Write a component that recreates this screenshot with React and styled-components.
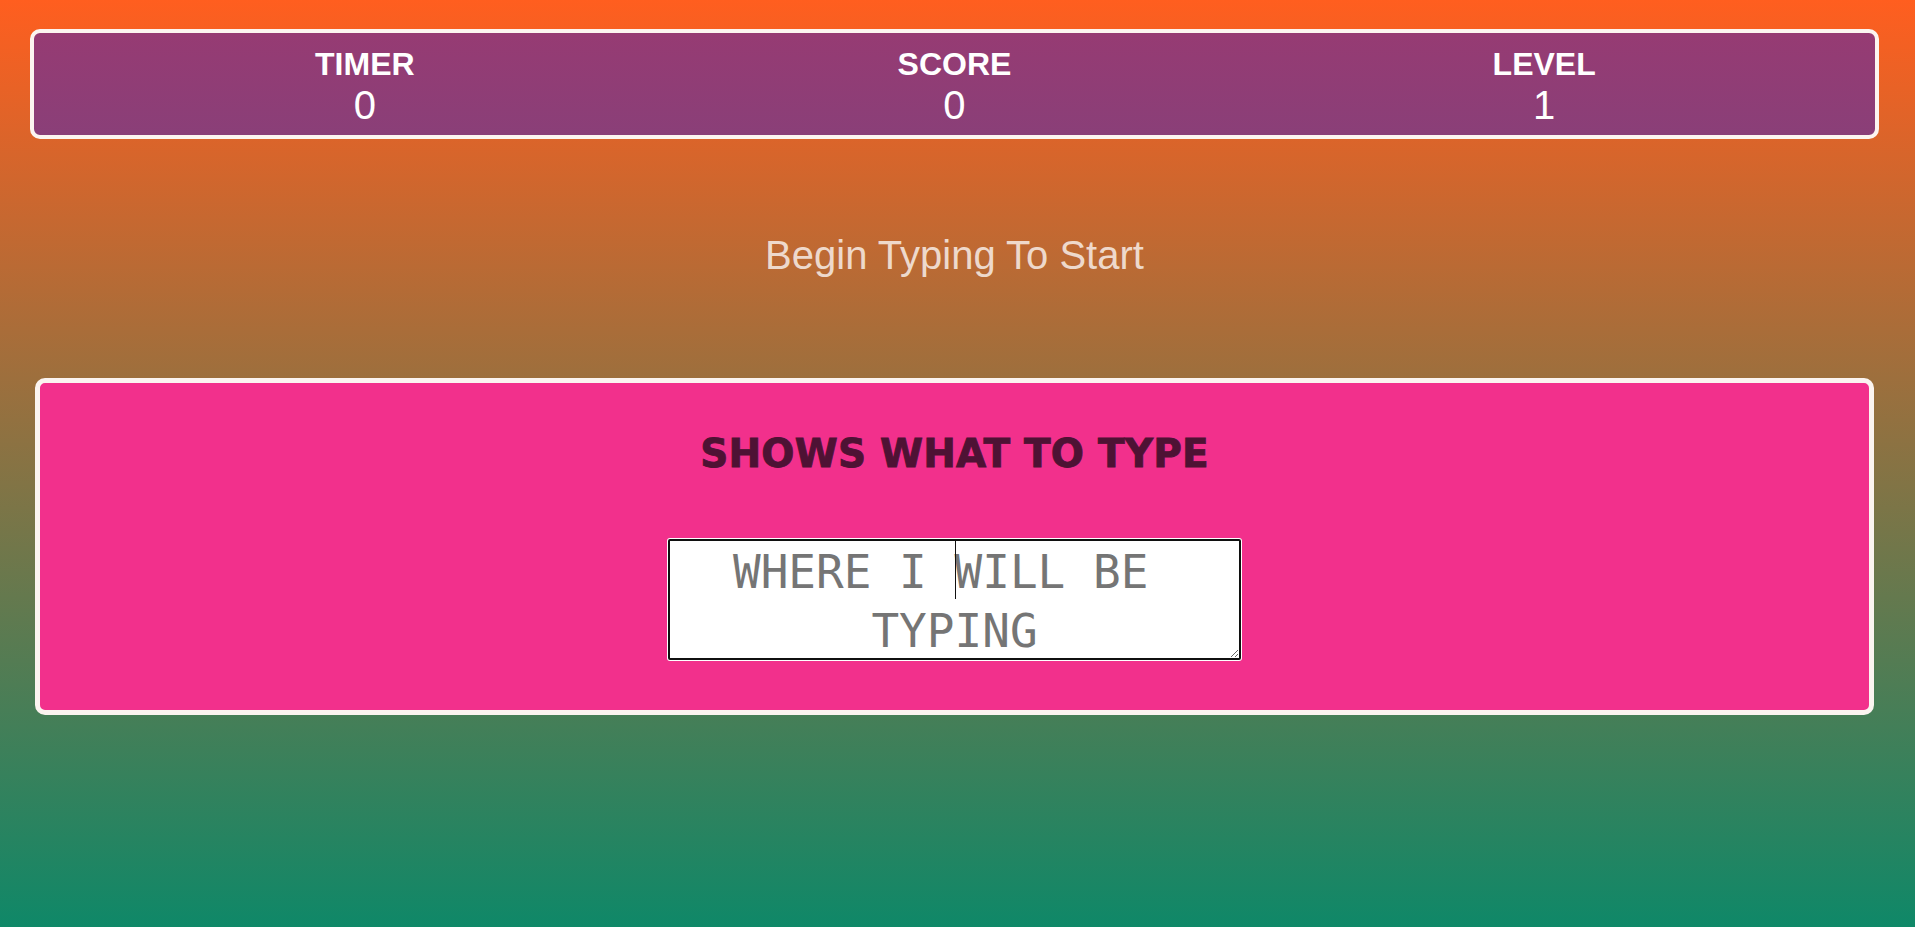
import React from "react";
import styled, { createGlobalStyle } from "styled-components";

const Global = createGlobalStyle`
  html, body {
    margin: 0;
    padding: 0;
    min-height: 100%;
  }
  body {
    min-height: 100vh;
    background: linear-gradient(to bottom, #ff5e1f 0%, #0f8868 100%);
    font-family: "Liberation Sans", Arial, sans-serif;
  }
  #root {
    min-height: 100vh;
  }
`;

const Page = styled.main`
  display: flex;
  flex-direction: column;
  padding: 29px 36px 0 30px;
  min-height: 100vh;
  box-sizing: border-box;
`;

const StatsBar = styled.section`
  display: grid;
  grid-template-columns: repeat(3, 1fr);
  padding: 13px 36px 7px;
  border: 4px solid #fcf5f0;
  border-radius: 10px;
  background: linear-gradient(to bottom, #963b73, #8a3f78);
  color: #ffffff;
`;

const Stat = styled.div`
  display: flex;
  flex-direction: column;
  align-items: center;
`;

const StatLabel = styled.span`
  font-family: "Liberation Sans", Arial, sans-serif;
  font-weight: 700;
  font-size: 32px;
  line-height: normal;
`;

const StatValue = styled.span`
  font-family: "Liberation Sans", Arial, sans-serif;
  font-weight: 400;
  font-size: 40px;
  line-height: normal;
`;

const Prompt = styled.p`
  margin: 93px 0 0;
  text-align: center;
  font-family: "Liberation Sans", Arial, sans-serif;
  font-size: 40px;
  line-height: 46px;
  color: rgba(255, 255, 255, 0.76);
`;

const TypingCard = styled.section`
  margin: 100px 5px 0 5px;
  padding: 48px 20px 50px;
  border: 5px solid #fbf4f0;
  border-radius: 10px;
  background: #f2308c;
  display: flex;
  flex-direction: column;
  align-items: center;
`;

const Target = styled.h1`
  margin: 0;
  font-family: "DejaVu Sans", Verdana, sans-serif;
  font-weight: 700;
  font-size: 39px;
  line-height: normal;
  letter-spacing: 0.2px;
  color: #4e1234;
  -webkit-text-stroke: 0.9px #4e1234;
  text-align: center;
`;

const InputWrap = styled.div`
  position: relative;
  margin-top: 63px;
  display: flex;

  &::after {
    content: "";
    position: absolute;
    left: 50%;
    top: 2px;
    width: 1px;
    height: 58px;
    background: #111111;
  }
`;

const TypeArea = styled.textarea`
  box-sizing: border-box;
  width: 573px;
  height: 121px;
  margin: 0;
  padding: 2px;
  border: 2px solid #101010;
  border-radius: 2px;
  box-shadow: 0 0 0 1px #ffffff;
  outline: none;
  background: #ffffff;
  font-family: "DejaVu Sans Mono", "Liberation Mono", monospace;
  font-size: 46px;
  line-height: 59px;
  text-align: center;
  white-space: break-spaces;
  color: #111111;
  overflow: hidden;
  caret-color: transparent;

  &::placeholder {
    color: #757575;
    white-space: break-spaces;
  }
`;

const stats = [
  { label: "TIMER", value: 0 },
  { label: "SCORE", value: 0 },
  { label: "LEVEL", value: 1 },
];

export default function App() {
  return (
    <>
      <Global />
      <Page>
        <StatsBar>
          {stats.map((s) => (
            <Stat key={s.label}>
              <StatLabel>{s.label}</StatLabel>
              <StatValue>{s.value}</StatValue>
            </Stat>
          ))}
        </StatsBar>
        <Prompt>Begin Typing To Start</Prompt>
        <TypingCard>
          <Target>SHOWS WHAT TO TYPE</Target>
          <InputWrap>
            <TypeArea placeholder="WHERE I WILL BE TYPING" spellCheck={false} />
          </InputWrap>
        </TypingCard>
      </Page>
    </>
  );
}
